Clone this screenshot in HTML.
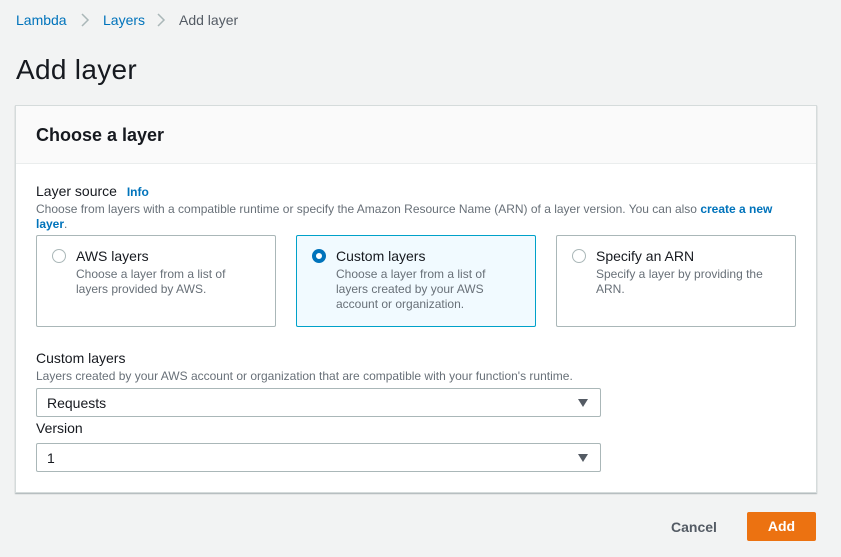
<!DOCTYPE html><html><head><style>
body{margin:0;width:841px;height:557px;background:#f2f3f3;font-family:"Liberation Sans",sans-serif;color:#16191f;position:relative;overflow:hidden}
.a{position:absolute}
.bc{top:12px;font-size:14px;color:#0073bb}
.p{left:15px;top:105px;width:800px;height:386px;background:#fff;border:1px solid #d5dbdb;box-shadow:0 1px 1px rgba(0,28,36,.3)}
.h{left:0;top:0;width:800px;height:57px;background:#fafafa;border-bottom:1px solid #eaeded}
.card{top:129px;width:238px;height:90px;border:1px solid #aab7b8;border-radius:2px;background:#fff}
.card.s{border-color:#00a1c9;background:#f1faff}
.card .r{left:15px;top:13px;width:12px;height:12px;border:1px solid #aab7b8;border-radius:50%;background:#fff}
.card .t{left:39px;top:12px;font-size:14px}
.card .d{left:39px;top:31px;font-size:12px;color:#687078;line-height:15px;width:170px}
.sel{left:20px;width:563px;height:27px;border:1px solid #aab7b8;border-radius:2px;font-size:14px}
.sel span{position:absolute;left:10px;top:6px}
.sel i{position:absolute;right:12px;top:10px;border-left:5px solid transparent;border-right:5px solid transparent;border-top:8px solid #545b64}
</style></head><body>
<div class="a bc" style="left:16px">Lambda</div>
<svg class="a" style="left:80px;top:12px" width="10" height="16"><path d="M2 2l6 6-6 6" fill="none" stroke="#aab7b8" stroke-width="1.5"/></svg>
<div class="a bc" style="left:103px">Layers</div>
<svg class="a" style="left:156px;top:12px" width="10" height="16"><path d="M2 2l6 6-6 6" fill="none" stroke="#aab7b8" stroke-width="1.5"/></svg>
<div class="a bc" style="left:179px;color:#545b64">Add layer</div>
<div class="a" style="left:16px;top:54px;font-size:28px;letter-spacing:.3px">Add layer</div>
<div class="a p">
 <div class="a h"><div class="a" style="left:20px;top:19px;font-size:18px;font-weight:bold">Choose a layer</div></div>
 <div class="a" style="left:20px;top:77px;font-size:14px">Layer source <b style="color:#0073bb;font-size:12px;margin-left:6px">Info</b></div>
 <div class="a" style="left:20px;top:96px;font-size:12px;color:#687078;width:750px;line-height:15px">Choose from layers with a compatible runtime or specify the Amazon Resource Name (ARN) of a layer version. You can also <b style="color:#0073bb">create a new layer</b>.</div>
 <div class="a card" style="left:20px"><div class="a r"></div><div class="a t">AWS layers</div><div class="a d">Choose a layer from a list of layers provided by AWS.</div></div>
 <div class="a card s" style="left:280px"><div class="a r" style="border:4px solid #0073bb;width:6px;height:6px"></div><div class="a t">Custom layers</div><div class="a d" style="width:160px">Choose a layer from a list of layers created by your AWS account or organization.</div></div>
 <div class="a card" style="left:540px"><div class="a r"></div><div class="a t">Specify an ARN</div><div class="a d">Specify a layer by providing the ARN.</div></div>
 <div class="a" style="left:20px;top:244px;font-size:14px">Custom layers</div>
 <div class="a" style="left:20px;top:263px;font-size:12px;color:#687078">Layers created by your AWS account or organization that are compatible with your function's runtime.</div>
 <div class="a sel" style="top:282px"><span>Requests</span><i></i></div>
 <div class="a" style="left:20px;top:314px;font-size:14px">Version</div>
 <div class="a sel" style="top:337px"><span>1</span><i></i></div>
</div>
<div class="a" style="left:671px;top:519px;font-size:14px;font-weight:bold;color:#545b64">Cancel</div>
<div class="a" style="left:747px;top:512px;width:69px;height:29px;background:#ec7211;border-radius:2px;color:#fff;font-weight:bold;font-size:14px;text-align:center;line-height:29px">Add</div>
</body></html>
